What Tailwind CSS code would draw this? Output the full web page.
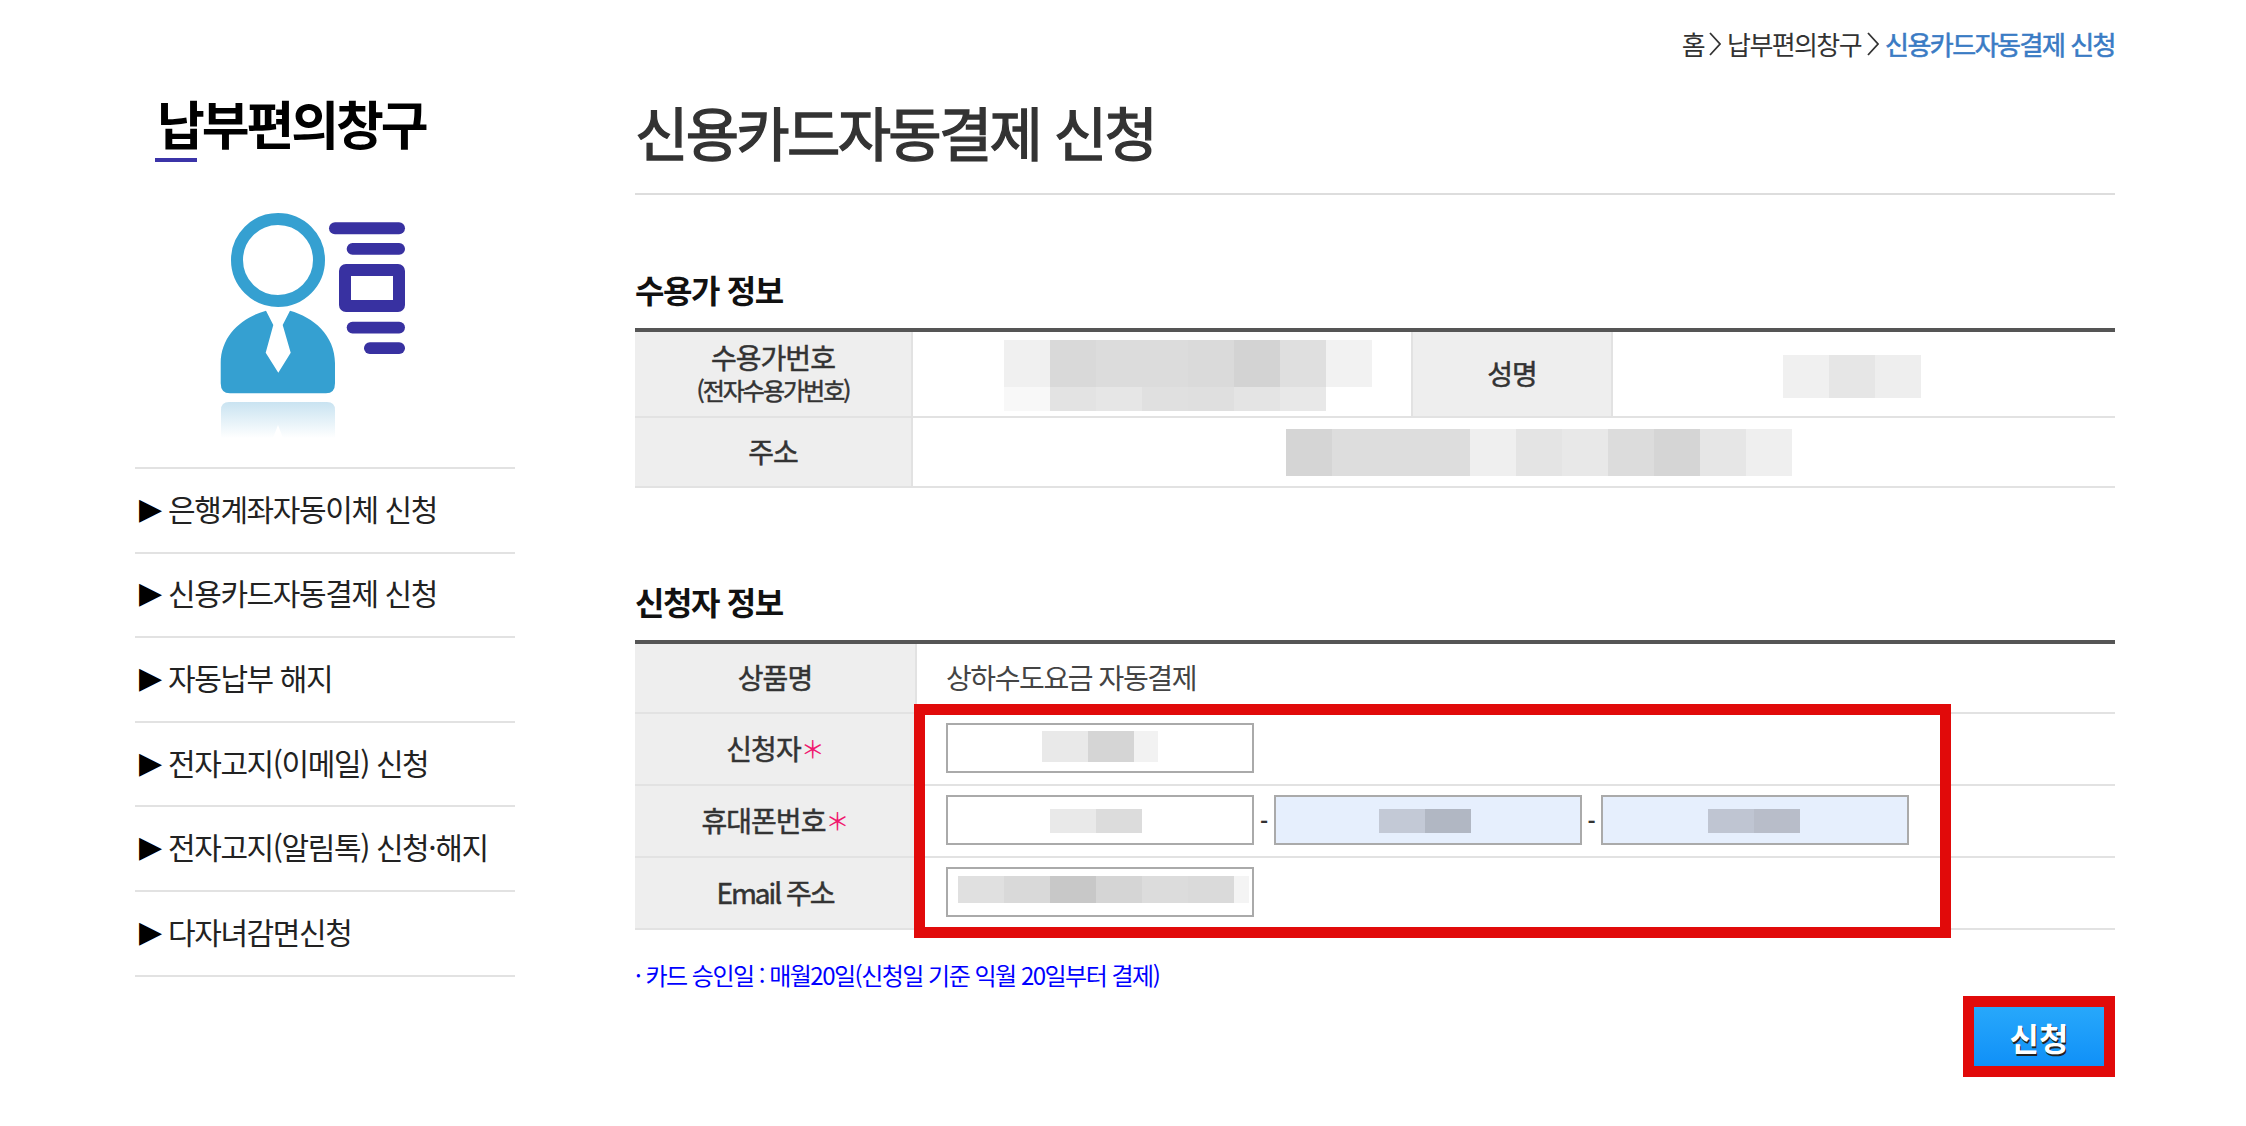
<!DOCTYPE html>
<html lang="ko">
<head>
<meta charset="utf-8">
<title>신용카드자동결제 신청</title>
<script src="https://cdn.jsdelivr.net/npm/@tailwindcss/browser@4"></script>
</head>
<body class="bg-white">
<div class="flex w-[2246px] h-[1126px] overflow-hidden font-['Noto_Sans_CJK_KR',sans-serif] text-[#333]">
  <!-- sidebar -->
  <aside class="ml-[135px] w-[380px] shrink-0 pt-[93px]">
    <h2 class="ml-[22px] h-[60px] leading-[60px] text-[52px] font-bold tracking-[-3.1px] text-black whitespace-nowrap">납부편의창구</h2>
    <div class="ml-[20px] mt-[5px] h-1 w-[42px] bg-[#3b34a8]"></div>
    <svg class="ml-[85px] mt-[48px] block" width="190" height="230" viewBox="220 210 190 230">
      <defs><linearGradient id="r" x1="0" y1="0" x2="0" y2="1"><stop offset="0" stop-color="#c9e3f1"/><stop offset="1" stop-color="#ffffff"/></linearGradient></defs>
      <circle cx="278" cy="260" r="41" fill="none" stroke="#35a0d1" stroke-width="12"/>
      <path fill="#35a0d1" d="M220.7 363.3V383.3Q220.7 393.3 230 393.3H326Q335 393.3 335 383.3V363.3C335 335 313 317 290 310.7L282.7 325L290.7 352.7L278.3 372.7L265.7 352.7L273.3 325L266 310.7C243 317 220.7 335 220.7 363.3Z"/>
      <path fill="url(#r)" d="M221 438V410Q221 402 229 402H327Q335 402 335 410V438H283L278 425L273 438Z"/>
      <g fill="#3831a1">
        <rect x="329" y="222.3" width="76" height="12" rx="6"/>
        <rect x="346.7" y="243" width="58.3" height="11.7" rx="5.8"/>
        <rect x="346.7" y="321.7" width="58.3" height="11.7" rx="5.8"/>
        <rect x="364" y="342.3" width="41" height="11.7" rx="5.8"/>
      </g>
      <rect x="345" y="270" width="54" height="36" rx="1" fill="none" stroke="#3831a1" stroke-width="12"/>
    </svg>
    <ul class="mt-[27px] border-t-2 border-[#e2e2e2] text-[30px] tracking-[-1.4px] text-[#222]">
      <li class="h-[84.6px] border-b-2 border-[#e2e2e2] flex items-center pl-[4px] pb-[4px] whitespace-nowrap"><span class="font-['DejaVu_Sans',sans-serif] text-[30px] w-[29px] tracking-normal text-black">▶</span>은행계좌자동이체 신청</li>
      <li class="h-[84.6px] border-b-2 border-[#e2e2e2] flex items-center pl-[4px] pb-[4px] whitespace-nowrap"><span class="font-['DejaVu_Sans',sans-serif] text-[30px] w-[29px] tracking-normal text-black">▶</span>신용카드자동결제 신청</li>
      <li class="h-[84.6px] border-b-2 border-[#e2e2e2] flex items-center pl-[4px] pb-[4px] whitespace-nowrap"><span class="font-['DejaVu_Sans',sans-serif] text-[30px] w-[29px] tracking-normal text-black">▶</span>자동납부 해지</li>
      <li class="h-[84.6px] border-b-2 border-[#e2e2e2] flex items-center pl-[4px] pb-[4px] whitespace-nowrap"><span class="font-['DejaVu_Sans',sans-serif] text-[30px] w-[29px] tracking-normal text-black">▶</span>전자고지(이메일) 신청</li>
      <li class="h-[84.6px] border-b-2 border-[#e2e2e2] flex items-center pl-[4px] pb-[4px] whitespace-nowrap"><span class="font-['DejaVu_Sans',sans-serif] text-[30px] w-[29px] tracking-normal text-black">▶</span>전자고지(알림톡) 신청·해지</li>
      <li class="h-[84.6px] border-b-2 border-[#e2e2e2] flex items-center pl-[4px] pb-[4px] whitespace-nowrap"><span class="font-['DejaVu_Sans',sans-serif] text-[30px] w-[29px] tracking-normal text-black">▶</span>다자녀감면신청</li>
    </ul>
  </aside>

  <!-- main -->
  <main class="ml-[120px] w-[1480px] shrink-0 pt-[30px]">
    <nav class="h-[30px] pb-[2px] flex items-center justify-end text-[26px] leading-[28px] tracking-[-1.6px] whitespace-nowrap">
      <span>홈</span>
      <svg class="ml-[5px] mr-[6px]" width="12" height="24" viewBox="0 0 12 24"><path d="M1 1L11 12L1 23" fill="none" stroke="#333" stroke-width="1.8"/></svg>
      <span>납부편의창구</span>
      <svg class="mx-[6px]" width="12" height="24" viewBox="0 0 12 24"><path d="M1 1L11 12L1 23" fill="none" stroke="#333" stroke-width="1.8"/></svg>
      <span class="text-[#3a7bc4] tracking-[-1.5px] [-webkit-text-stroke:0.6px_#3a7bc4]">신용카드자동결제 신청</span>
    </nav>
    <h1 class="mt-[38px] h-[97px] pb-[29px] border-b-2 border-[#dddddd] flex items-center text-[58px] tracking-[-2.7px] whitespace-nowrap [-webkit-text-stroke:1.4px_#333]">신용카드자동결제 신청</h1>

    <h3 class="mt-[74px] h-[40px] leading-[40px] text-[32px] font-bold tracking-[-1.4px] text-[#111]">수용가 정보</h3>
    <div class="mt-[19px] border-t-4 border-[#555]">
      <div class="flex h-[86px] border-b-2 border-[#e2e2e2]">
        <div class="w-[278px] shrink-0 bg-[#eeeeee] border-r-2 border-[#e2e2e2] pb-[5px] flex flex-col items-center justify-center [-webkit-text-stroke:0.5px_#333]">
          <span class="text-[28px] leading-[36px] tracking-[-1px]">수용가번호</span>
          <span class="text-[24px] leading-[30px] tracking-[-2px]">(전자수용가번호)</span>
        </div>
        <div class="w-[498px] shrink-0 pl-[91px] pt-[8px]">
          <div class="flex h-[47px]">
            <div class="w-[46px] bg-[#f0f0f0]"></div><div class="w-[46px] bg-[#d9d9d9]"></div><div class="w-[46px] bg-[#dcdcdc]"></div><div class="w-[46px] bg-[#dcdcdc]"></div><div class="w-[46px] bg-[#dadada]"></div><div class="w-[46px] bg-[#d3d3d3]"></div><div class="w-[46px] bg-[#dfdfdf]"></div><div class="w-[46px] bg-[#f2f2f2]"></div>
          </div>
          <div class="flex h-[24px]">
            <div class="w-[46px] bg-[#f8f8f8]"></div><div class="w-[46px] bg-[#e3e3e3]"></div><div class="w-[46px] bg-[#e6e6e6]"></div><div class="w-[46px] bg-[#e0e0e0]"></div><div class="w-[46px] bg-[#dfdfdf]"></div><div class="w-[46px] bg-[#e4e4e4]"></div><div class="w-[46px] bg-[#e8e8e8]"></div>
          </div>
        </div>
        <div class="w-[202px] shrink-0 bg-[#eeeeee] border-x-2 border-[#e2e2e2] pb-[3px] flex items-center justify-center text-[28px] tracking-[-1px] [-webkit-text-stroke:0.5px_#333]">성명</div>
        <div class="flex-1 pl-[170px] pt-[23px]">
          <div class="flex h-[43px]"><div class="w-[46px] bg-[#f0f0f0]"></div><div class="w-[46px] bg-[#e6e6e6]"></div><div class="w-[46px] bg-[#eeeeee]"></div></div>
        </div>
      </div>
      <div class="flex h-[70px] border-b-2 border-[#e2e2e2]">
        <div class="w-[278px] shrink-0 bg-[#eeeeee] border-r-2 border-[#e2e2e2] pb-[3px] flex items-center justify-center text-[28px] tracking-[-1px] [-webkit-text-stroke:0.5px_#333]">주소</div>
        <div class="flex-1 pl-[373px] pt-[11px]">
          <div class="flex h-[47px]">
            <div class="w-[46px] bg-[#d5d5d5]"></div><div class="w-[46px] bg-[#dddddd]"></div><div class="w-[46px] bg-[#dddddd]"></div><div class="w-[46px] bg-[#dddddd]"></div><div class="w-[46px] bg-[#efefef]"></div><div class="w-[46px] bg-[#e4e4e4]"></div><div class="w-[46px] bg-[#e8e8e8]"></div><div class="w-[46px] bg-[#dcdcdc]"></div><div class="w-[46px] bg-[#d5d5d5]"></div><div class="w-[46px] bg-[#e6e6e6]"></div><div class="w-[46px] bg-[#efefef]"></div>
          </div>
        </div>
      </div>
    </div>

    <h3 class="mt-[93px] h-[40px] leading-[40px] text-[32px] font-bold tracking-[-1.4px] text-[#111]">신청자 정보</h3>
    <div class="relative mt-[19px] border-t-4 border-[#555]">
      <div class="flex h-[70px] border-b-2 border-[#e2e2e2]">
        <div class="w-[282px] shrink-0 bg-[#eeeeee] border-r-2 border-[#e2e2e2] pb-[2px] flex items-center justify-center text-[28px] tracking-[-1px] [-webkit-text-stroke:0.5px_#333]">상품명</div>
        <div class="flex-1 flex items-center pl-[29px] pb-[2px] text-[28px] tracking-[-1.4px] text-[#444]">상하수도요금 자동결제</div>
      </div>
      <div class="flex h-[72px] border-b-2 border-[#e2e2e2]">
        <div class="w-[282px] shrink-0 bg-[#eeeeee] border-r-2 border-[#e2e2e2] pb-[2px] flex items-center justify-center text-[28px] tracking-[-1px]"><span class="[-webkit-text-stroke:0.5px_#333]">신청자</span><span class="text-[#f0186e] font-normal text-[24px] leading-[24px]">＊</span></div>
        <div class="flex-1 flex items-center pl-[29px] pb-[2px]">
          <div class="w-[308px] h-[50px] border-2 border-[#aaaaaa] bg-white pl-[94px] pt-[6px]">
            <div class="flex h-[31px]"><div class="w-[46px] bg-[#e9e9e9]"></div><div class="w-[46px] bg-[#d5d5d5]"></div><div class="w-[24px] bg-[#f2f2f2]"></div></div>
          </div>
        </div>
      </div>
      <div class="flex h-[72px] border-b-2 border-[#e2e2e2]">
        <div class="w-[282px] shrink-0 bg-[#eeeeee] border-r-2 border-[#e2e2e2] pb-[2px] flex items-center justify-center text-[28px] tracking-[-1px]"><span class="[-webkit-text-stroke:0.5px_#333]">휴대폰번호</span><span class="text-[#f0186e] font-normal text-[24px] leading-[24px]">＊</span></div>
        <div class="flex-1 flex items-center pl-[29px] pb-[2px]">
          <div class="w-[308px] h-[50px] border-2 border-[#aaaaaa] bg-white pl-[102px] pt-[12px]">
            <div class="flex h-[24px]"><div class="w-[46px] bg-[#e9e9e9]"></div><div class="w-[46px] bg-[#dcdcdc]"></div></div>
          </div>
          <span class="w-[20px] text-center text-[22px] leading-[22px] font-bold">-</span>
          <div class="w-[308px] h-[50px] border-2 border-[#aaaaaa] bg-[#e6effd] pl-[103px] pt-[12px]">
            <div class="flex h-[24px]"><div class="w-[46px] bg-[#c3c9d6]"></div><div class="w-[46px] bg-[#b1b7c3]"></div></div>
          </div>
          <span class="w-[19px] text-center text-[22px] leading-[22px] font-bold">-</span>
          <div class="w-[308px] h-[50px] border-2 border-[#aaaaaa] bg-[#e6effd] pl-[105px] pt-[12px]">
            <div class="flex h-[24px]"><div class="w-[46px] bg-[#bfc5d2]"></div><div class="w-[46px] bg-[#b8bdc9]"></div></div>
          </div>
        </div>
      </div>
      <div class="flex h-[72px] border-b-2 border-[#e2e2e2]">
        <div class="w-[282px] shrink-0 bg-[#eeeeee] border-r-2 border-[#e2e2e2] pb-[2px] flex items-center justify-center text-[28px] tracking-[-2px] [-webkit-text-stroke:0.5px_#333]">Email 주소</div>
        <div class="flex-1 flex items-center pl-[29px] pb-[2px]">
          <div class="w-[308px] h-[50px] border-2 border-[#aaaaaa] bg-white pl-[10px] pt-[7px]">
            <div class="flex h-[27px]"><div class="w-[46px] bg-[#e0e0e0]"></div><div class="w-[46px] bg-[#d9d9d9]"></div><div class="w-[46px] bg-[#c8c8c8]"></div><div class="w-[46px] bg-[#d5d5d5]"></div><div class="w-[46px] bg-[#dcdcdc]"></div><div class="w-[46px] bg-[#dadada]"></div><div class="w-[15px] bg-[#f4f4f4]"></div></div>
          </div>
        </div>
      </div>
      <!-- annotation box -->
      <div class="absolute left-[279px] top-[60px] w-[1037px] h-[234px] border-[11px] border-[#e10a0a]"></div>
    </div>

    <p class="mt-[30px] h-[30px] leading-[30px] text-[24px] tracking-[-1.5px] text-[#0000ff] whitespace-nowrap">· 카드 승인일 : 매월20일(신청일 기준 익월 20일부터 결제)</p>
    <div class="mt-[6px] flex justify-end">
      <button class="w-[152px] h-[81px] border-[11px] border-[#e10a0a] bg-linear-to-b from-[#27a8fb] to-[#0f90f8] text-white text-[32px] font-bold [text-shadow:1px_2px_0_#222]">신청</button>
    </div>
  </main>
</div>
</body>
</html>
